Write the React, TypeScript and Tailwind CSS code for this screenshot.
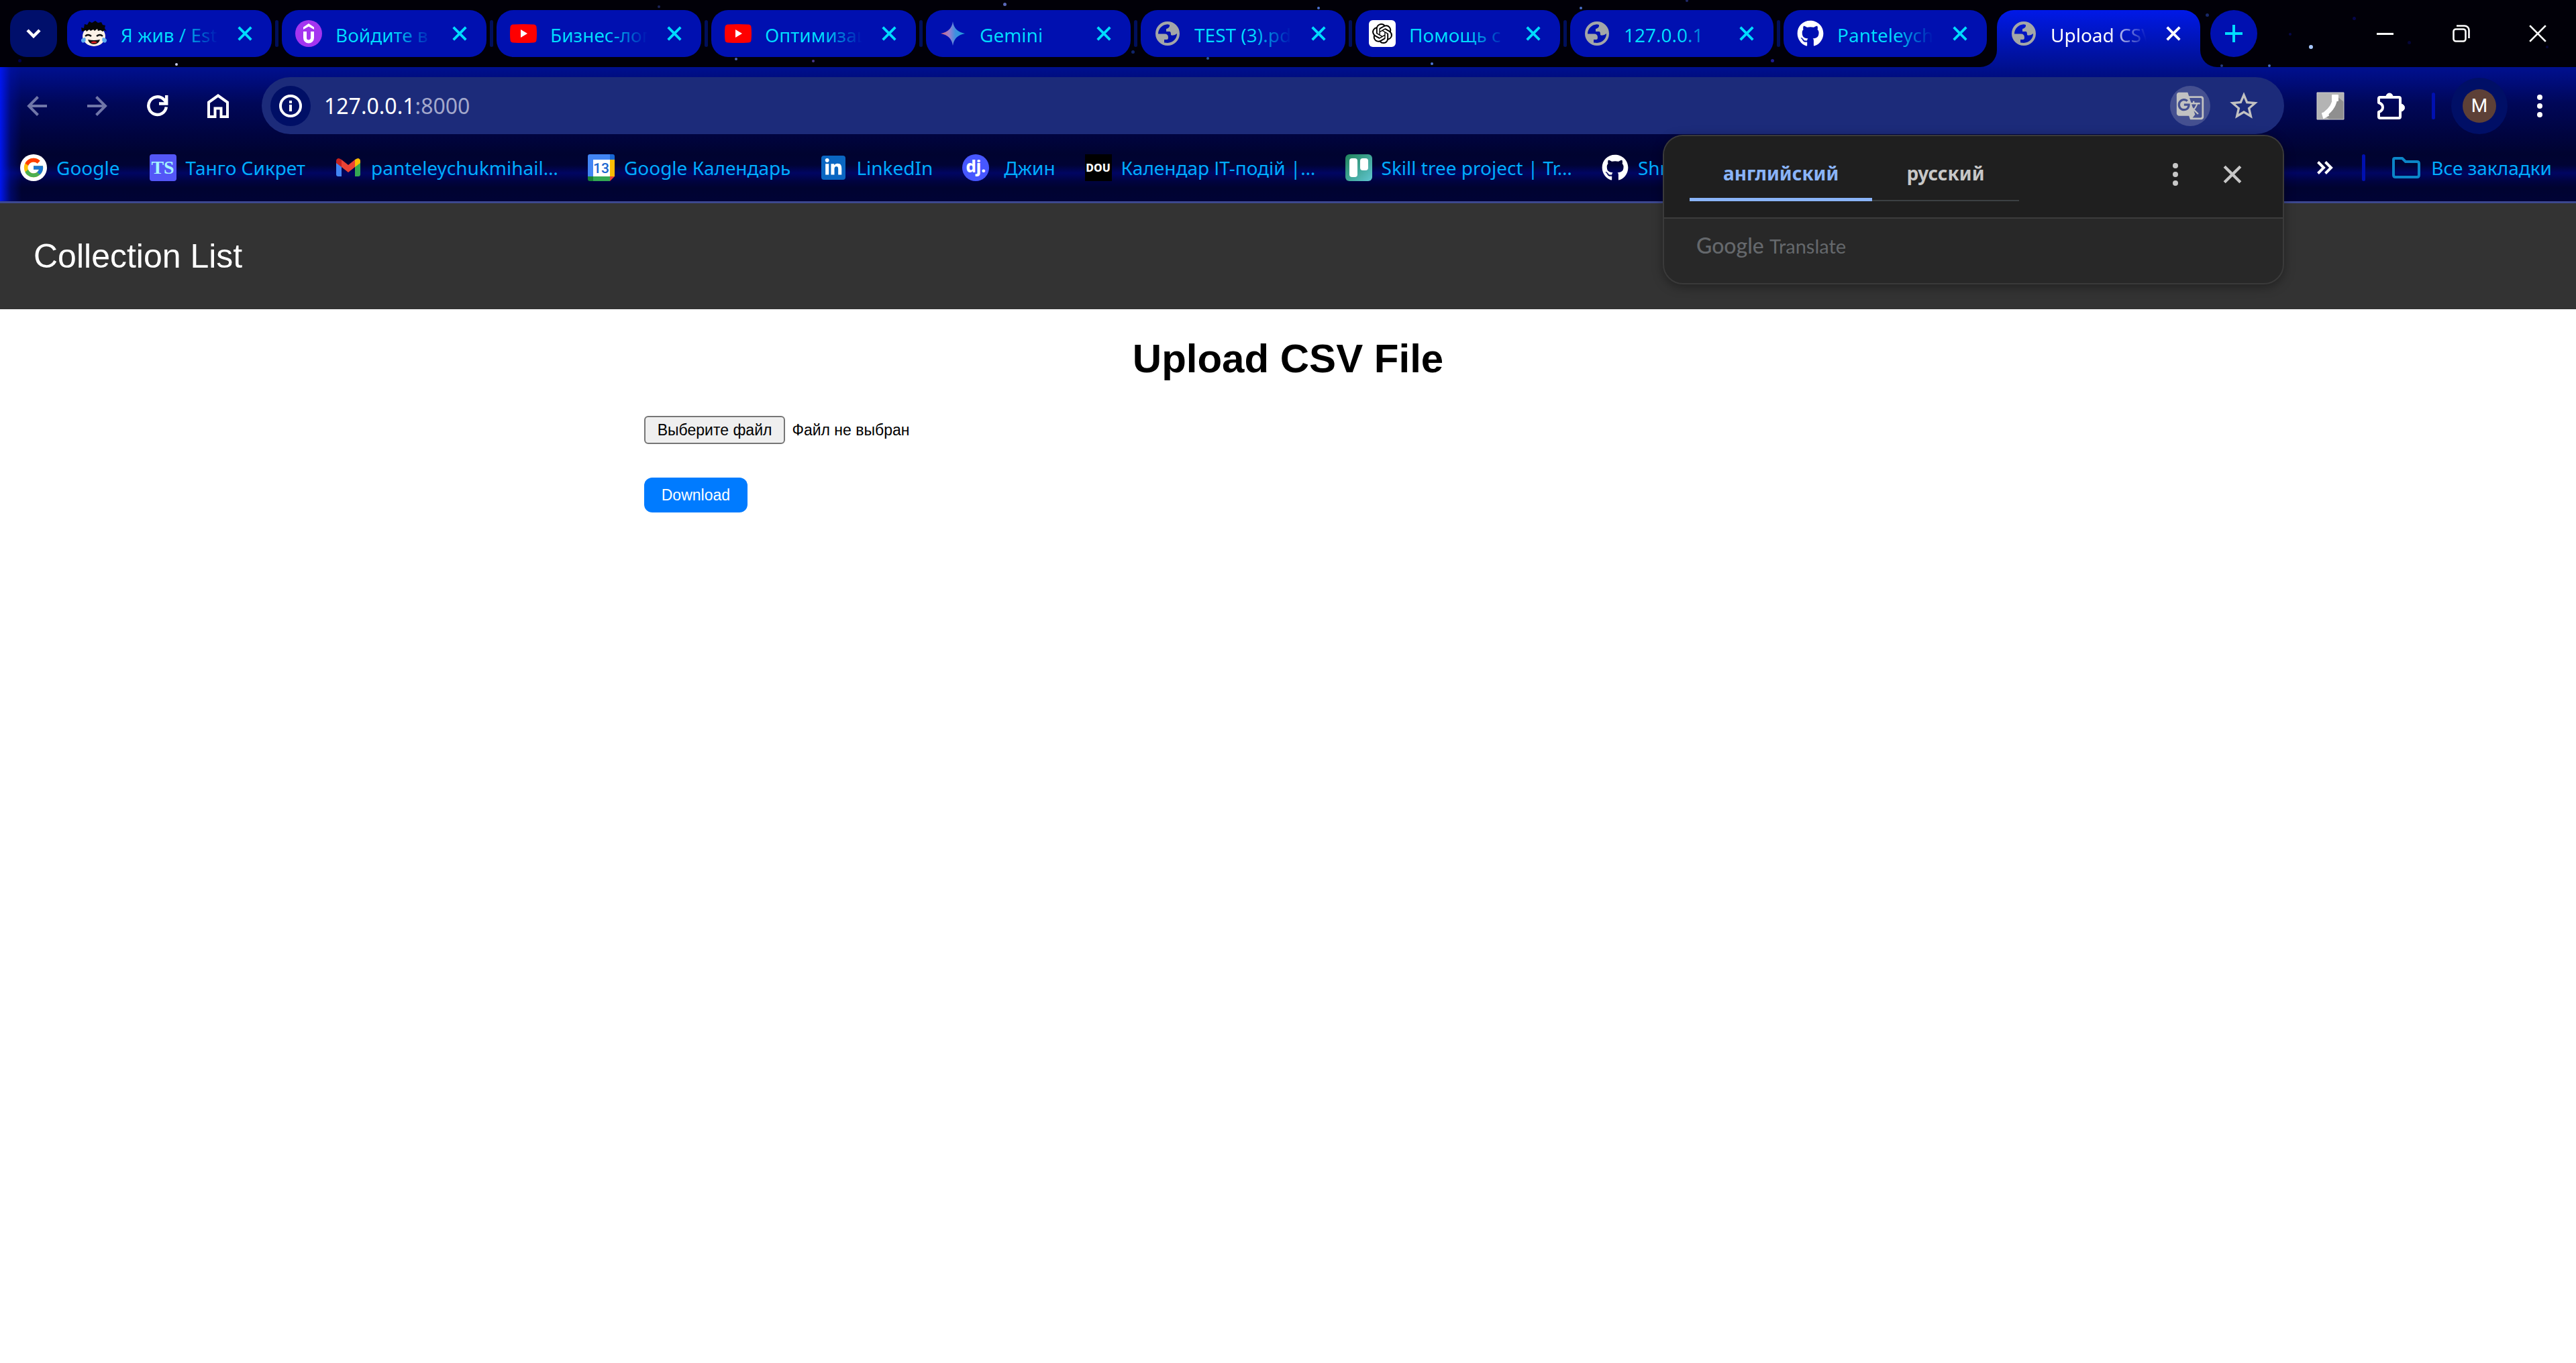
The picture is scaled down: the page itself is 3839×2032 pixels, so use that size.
import type { ReactNode } from "react";
import { FcGoogle } from "react-icons/fc";
import { FaGithub, FaLinkedinIn } from "react-icons/fa";
import { SiOpenai } from "react-icons/si";
import { MdGTranslate, MdStarOutline } from "react-icons/md";

/* ---------- favicons ---------- */

function LaughFace() {
  return (
    <svg viewBox="0 0 40 40" className="size-10">
      <ellipse cx="20" cy="24" rx="17" ry="15" fill="#fbf1e6" />
      <path d="M2 17 1 11l4 1L6 6l4 1 3-5 4 2 5-3 4 3 5-1 2 4 4 1-1 4 3 5-3-2-3 2-3-2-4 1-1-3-4 3-2-2-4 2-2-2-4 3-1-2z" fill="#050505" />
      <path d="M7 24q4-4 9 0M24 24q5-4 9 0" stroke="#111" strokeWidth="2.400" fill="none" />
      <path d="M11 29q9 2 18 0-2 7-9 7t-9-7z" fill="#111" />
      <path d="M15 33q5-3 10 0-5 3-10 0z" fill="#e02020" />
      <path d="M7 26q-7 1-6 5t5 2q3-2 1-7zM33 26q7 1 6 5t-5 2q-3-2-1-7z" fill="#5aa9f0" />
    </svg>
  );
}

function PurpleU() {
  return (
    <svg viewBox="0 0 40 40" className="size-10">
      <circle cx="20" cy="20" r="20" fill="#a435f0" />
      <path d="M12 10.500 20 5l8 5.500V14L20 9.500 12 14z" fill="#fff" />
      <path d="M14.500 17v9.500a5.500 5.500 0 0 0 11 0V17" stroke="#fff" strokeWidth="5" fill="none" />
    </svg>
  );
}

function YouTube() {
  return (
    <svg viewBox="0 0 40 40" className="size-10">
      <path d="M4 6.500q16-1 32 0 3 .5 3.500 3.500 1 10 0 20-.5 3-3.500 3.500-16 1-32 0-3-.5-3.500-3.500-1-10 0-20Q1 7 4 6.500z" fill="#f00" />
      <path d="M16 14v12l10-6z" fill="#fff" />
    </svg>
  );
}

function Spark() {
  return (
    <svg viewBox="0 0 40 40" className="size-10">
      <defs>
        <linearGradient id="spark" x1="0" y1="0" x2="1" y2="0">
          <stop offset="0" stopColor="#d96570" />
          <stop offset="0.35" stopColor="#9a7fd0" />
          <stop offset="0.6" stopColor="#3f8fe0" />
          <stop offset="1" stopColor="#1fa0d8" />
        </linearGradient>
      </defs>
      <path d="M20 2q2 15 18 18-16 3-18 18Q18 23 2 20 18 17 20 2z" fill="url(#spark)" />
    </svg>
  );
}

function Globe() {
  return (
    <svg viewBox="-2 -2 40 40" className="size-10">
      <path
        fillRule="evenodd"
        fill="#a3a6a8"
        d="M18 0a18 18 0 1 0 0 36 18 18 0 1 0 0-36zM21 5v2q-1 3-5 4v4h5q2 0 2 5 1 1.500 6 0l3-2c0 8-6 13.500-14 14l-5-.5V27h4q2 0 2-3 0-5.500-5-5.500H4c0-7.500 6-14 14-14.300z"
      />
    </svg>
  );
}

function OpenAi() {
  return (
    <span className="flex size-10 items-center justify-center rounded-md bg-white text-black">
      <SiOpenai size={30} />
    </span>
  );
}

function Octocat() {
  return <FaGithub size={40} className="text-white" />;
}

function GoogleG() {
  return (
    <span className="flex size-10 items-center justify-center rounded-full bg-white">
      <FcGoogle size={34} />
    </span>
  );
}

function TangoMark() {
  return (
    <span className="flex size-10 items-center justify-center rounded-sm bg-[#5457f7] font-['Liberation_Serif',serif] text-[28px] leading-none font-bold text-[#a5f3ff]">
      TS
    </span>
  );
}

function Gmail() {
  return (
    <svg viewBox="0 0 40 40" className="size-10">
      <path d="M2 12v18q0 3 3 3h5V18z" fill="#4285f4" />
      <path d="M30 18v15h5q3 0 3-3V12z" fill="#34a853" />
      <path d="M30 8v11l8-6v-3q0-3-3-4-2 0-5 2z" fill="#fbbc04" />
      <path d="M10 19V8l10 8 10-8v11l-10 8z" fill="#ea4335" />
      <path d="M2 10v3l8 6V8q-3-2-5-2-3 1-3 4z" fill="#c5221f" />
    </svg>
  );
}

function CalendarMark() {
  return (
    <svg viewBox="0 0 40 40" className="size-10">
      <path d="M3 0h30v8H8v25H0V3q0-3 3-3z" fill="#4285f4" />
      <path d="M33 0h4q3 0 3 3v5h-7z" fill="#1967d2" />
      <path d="M33 8h7v25h-7z" fill="#fbbc04" />
      <path d="M8 33h25v7H8z" fill="#34a853" />
      <path d="M0 33h8v7H3q-3 0-3-3z" fill="#188038" />
      <path d="M33 33h7l-7 7z" fill="#ea4335" />
      <path d="M8 8h25v25H8z" fill="#fff" />
      <text x="20" y="28" textAnchor="middle" fontFamily="Roboto, sans-serif" fontWeight="500" fontSize="21" fill="#1a66d0">13</text>
    </svg>
  );
}

function LinkedIn() {
  return (
    <span className="flex size-10 items-center justify-center">
      <span className="flex size-9 items-center justify-center rounded-sm bg-[#0a66c2] text-white">
        <FaLinkedinIn size={28} />
      </span>
    </span>
  );
}

function Djinni() {
  return (
    <span className="mr-2 flex size-10 items-center justify-center rounded-full bg-[#4757ff] pb-1 text-2xl leading-none font-extrabold text-white">
      dj.
    </span>
  );
}

function Dou() {
  return (
    <span className="flex size-10 items-center justify-center bg-black text-base leading-none font-extrabold text-white">
      DOU
    </span>
  );
}

function Trello() {
  return (
    <span className="flex size-10 items-start justify-center gap-1 rounded-md bg-linear-to-br from-[#1f845a] to-[#60c6d2] pt-[6px]">
      <span className="h-7 w-3 rounded-sm bg-white" />
      <span className="h-[18px] w-3 rounded-sm bg-white" />
    </span>
  );
}

/* ---------- shared pieces ---------- */

function Cross({ size, stroke }: { size: number; stroke: number }) {
  return (
    <svg width={size} height={size} viewBox="0 0 26 26">
      <path d="M2 2 24 24M24 2 2 24" stroke="currentColor" strokeWidth={stroke} fill="none" />
    </svg>
  );
}

function Dots({ className }: { className: string }) {
  return (
    <svg viewBox="0 0 10 36" className={className} fill="currentColor">
      <circle cx="5" cy="5" r="4" />
      <circle cx="5" cy="18" r="4" />
      <circle cx="5" cy="31" r="4" />
    </svg>
  );
}

/* ---------- tab strip ---------- */

type Tab = { title: string; icon: ReactNode };

const TABS: Tab[] = [
  { title: "Я жив / Est", icon: <LaughFace /> },
  { title: "Войдите в", icon: <PurpleU /> },
  { title: "Бизнес-лог", icon: <YouTube /> },
  { title: "Оптимизац", icon: <YouTube /> },
  { title: "Gemini", icon: <Spark /> },
  { title: "TEST (3).pd", icon: <Globe /> },
  { title: "Помощь с", icon: <OpenAi /> },
  { title: "127.0.0.1", icon: <Globe /> },
  { title: "Panteleych", icon: <Octocat /> },
];

const STARS: [number, number, number, string][] = [
  [263, 96, 4, "#c8ccf0"],
  [29, 90, 5, "#00004a"],
  [982, 10, 4, "#1c2458"],
  [1097, 88, 4, "#4a62b0"],
  [1212, 91, 4, "#4a3a90"],
  [1497, 6, 5, "#5a68b8"],
  [1688, 77, 5, "#10246a"],
  [1800, 87, 4, "#2858a0"],
  [1965, 12, 4, "#4a70d0"],
  [2134, 95, 4, "#5078d8"],
  [2356, 12, 4, "#4a70c8"],
  [2514, 1, 4, "#20286a"],
  [2641, 90, 5, "#1c1c90"],
  [3289, 22, 5, "#182868"],
  [3311, 98, 4, "#283c80"],
  [3382, 98, 4, "#4868b8"],
  [3413, 51, 4, "#06084a"],
  [3444, 70, 6, "#a8c8ff"],
  [3508, 27, 5, "#06064a"],
  [3590, 63, 5, "#050538"],
  [3796, 70, 4, "#050538"],
];

function TabBody({ tab }: { tab: Tab }) {
  return (
    <div className="flex h-[70px] items-center pr-5 pl-5">
      {tab.icon}
      <span className="mt-1 ml-5 min-w-0 flex-1 overflow-hidden mask-r-from-60% text-[28px] leading-10 whitespace-nowrap">
        {tab.title}
      </span>
      <button aria-label={"Закрыть " + tab.title} className="ml-5 flex size-10 shrink-0 items-center justify-center">
        <Cross size={22} stroke={4.5} />
      </button>
    </div>
  );
}

function Foot({ side }: { side: "left" | "right" }) {
  return (
    <svg
      viewBox="0 0 25 25"
      className={side === "left" ? "absolute bottom-0 -left-[25px] size-[25px]" : "absolute -right-[25px] bottom-0 size-[25px]"}
    >
      <defs>
        <linearGradient id={"foot-" + side} x1="0" y1="0" x2="0" y2="1">
          <stop offset="0" stopColor="#0012aa" />
          <stop offset="1" stopColor="#001090" />
        </linearGradient>
      </defs>
      <path d={side === "left" ? "M25 0v25H0A25 25 0 0 0 25 0z" : "M0 0v25h25A25 25 0 0 1 0 0z"} fill={`url(#foot-${side})`} />
    </svg>
  );
}

function TabStrip() {
  return (
    <div className="relative flex h-[100px] items-start bg-[#010008] pt-[15px] pl-[15px]">
      <div className="pointer-events-none absolute inset-0 overflow-hidden">
        {STARS.map(([x, y, d, c]) => (
          <span
            key={x}
            className="absolute rounded-full"
            style={{ left: x - d / 2, top: y - d / 2, width: d, height: d, background: c }}
          />
        ))}
      </div>
      <button aria-label="Поиск вкладок" className="relative mr-[15px] flex size-[70px] shrink-0 items-center justify-center rounded-[25px] bg-[#000f6b] text-white">
        <svg width="22" height="14" viewBox="0 0 22 14">
          <path d="M2 2 11 11 20 2" stroke="currentColor" strokeWidth="4.500" fill="none" />
        </svg>
      </button>
      {TABS.map((tab, i) => (
        <div
          key={i}
          className={
            i < TABS.length - 2
              ? "relative flex max-w-80 min-w-0 flex-1 items-center"
              : "relative flex max-w-[318px] min-w-0 flex-1 items-center"
          }
        >
          <div className="min-w-0 flex-1 rounded-[25px] bg-[#0010b0] text-[#00dcff]">
            <TabBody tab={tab} />
          </div>
          <span className={i < TABS.length - 1 ? "mx-[5px] h-10 w-[5px] rounded-full bg-[#000f5c]" : "w-[15px]"} />
        </div>
      ))}
      <div className="relative h-[85px] max-w-[303px] min-w-0 flex-1 rounded-t-[25px] bg-linear-to-b from-[#0019e8] to-[#001090] text-white">
        <Foot side="left" />
        <TabBody tab={{ title: "Upload CSV", icon: <Globe /> }} />
        <Foot side="right" />
      </div>
      <button aria-label="Новая вкладка" className="relative ml-[15px] flex size-[70px] shrink-0 items-center justify-center rounded-full bg-[#0010b0] text-[#00dcff]">
        <svg width="26" height="26" viewBox="0 0 26 26">
          <path d="M13 0v26M0 13h26" stroke="currentColor" strokeWidth="4" />
        </svg>
      </button>
      <div className="relative ml-auto flex h-[70px] shrink-0 items-center text-white">
        <button aria-label="Свернуть" className="flex h-[70px] w-[114px] items-center justify-center">
          <span className="h-[3px] w-[25px] bg-white" />
        </button>
        <button aria-label="Восстановить" className="flex h-[70px] w-[114px] items-center justify-center">
          <svg width="26" height="26" viewBox="0 0 26 26" fill="none" stroke="currentColor" strokeWidth="2.600">
            <rect x="1.500" y="6.500" width="18" height="18" rx="3.500" />
            <path d="M6 1.500h12a6.500 6.500 0 0 1 6.500 6.500v12" />
          </svg>
        </button>
        <button aria-label="Закрыть окно" className="flex h-[70px] w-[114px] items-center justify-center">
          <Cross size={28} stroke={2.5} />
        </button>
      </div>
    </div>
  );
}

/* ---------- address row ---------- */

function Tool({ label, children, dim }: { label: string; children: ReactNode; dim?: boolean }) {
  return (
    <button
      aria-label={label}
      className={dim ? "flex h-[85px] w-[90px] shrink-0 items-center justify-center text-[#7076a8]" : "flex h-[85px] w-[90px] shrink-0 items-center justify-center text-white"}
    >
      {children}
    </button>
  );
}

function AddressRow() {
  return (
    <div className="relative flex h-[100px] items-center pt-[15px] pr-[6px] pl-[10px]">
      <Tool label="Назад" dim>
        <svg width="30" height="30" viewBox="0 0 30 30" fill="none" stroke="currentColor" strokeWidth="4">
          <path d="M30 15H3M16.500 1.500 3 15l13.500 13.500" />
        </svg>
      </Tool>
      <Tool label="Вперёд" dim>
        <svg width="30" height="30" viewBox="0 0 30 30" fill="none" stroke="currentColor" strokeWidth="4">
          <path d="M0 15h27M13.500 1.500 27 15 13.500 28.500" />
        </svg>
      </Tool>
      <Tool label="Обновить">
        <svg width="32" height="32" viewBox="0 0 32 32" fill="none" stroke="currentColor" strokeWidth="4.500">
          <path d="M28.800 17.500A13.300 13.300 0 1 1 25 6.200l4 4M29.200 0v12.500H18" />
        </svg>
      </Tool>
      <Tool label="Главная">
        <svg width="32" height="36" viewBox="0 0 32 36" fill="none" stroke="currentColor" strokeWidth="4">
          <path d="M2 34V12.500L16 2.500l14 10V34h-9.500V21.500h-9V34z" />
        </svg>
      </Tool>
      <div className="ml-5 flex h-[85px] flex-1 items-center rounded-full bg-[#1c2b7a] pl-[13px]">
        <button aria-label="Сведения о сайте" className="flex size-[60px] shrink-0 items-center justify-center rounded-full bg-[#000f66] text-white">
          <svg width="34" height="34" viewBox="0 0 34 34">
            <circle cx="17" cy="17" r="15" stroke="currentColor" strokeWidth="4" fill="none" />
            <path d="M15 15h4v10h-4zM15 9h4v4h-4z" fill="currentColor" />
          </svg>
        </button>
        <p className="ml-5 flex-1 text-[32px] leading-10 text-white">
          127.0.0.1<span className="text-[#a3a8cb]">:8000</span>
        </p>
        <button aria-label="Перевести страницу" className="flex size-[60px] shrink-0 items-center justify-center rounded-full bg-[#455090] text-[#c2c2c2]">
          <MdGTranslate size={44} />
        </button>
        <button aria-label="Добавить в закладки" className="mr-[35px] ml-[25px] flex shrink-0 items-center justify-center text-[#c2c2c2]">
          <MdStarOutline size={50} />
        </button>
      </div>
      <div className="ml-6 flex shrink-0">
        <Tool label="Телефон">
          <svg width="42" height="42" viewBox="0 0 42 42">
            <path d="M1 1h40v40H1z" fill="#b4b4b4" />
            <path d="M30 6 41 15v26H20l-9-6z" fill="#8f8f8f" />
            <path d="M28 8q-1 15-15 25" stroke="#fff" strokeWidth="7" fill="none" />
            <path d="M24 5h8v8h-8zM9 32l7-2 2 5-7 4z" fill="#fff" stroke="#fff" strokeWidth="2" strokeLinejoin="round" />
            <path d="M1 1h40v40H1z" fill="none" stroke="#cfcfcf" />
          </svg>
        </Tool>
        <Tool label="Расширения">
          <svg width="42" height="42" viewBox="0 0 42 42">
            <path d="M5 8h28q2 0 2 2v27q0 2-2 2H5q-2 0-2-2v-7q6-2 6-7t-6-7v-6q0-2 2-2z" fill="none" stroke="currentColor" strokeWidth="4" strokeLinejoin="round" />
            <path d="M14 7a5 5 0 0 1 10 0zM36 18a5 5 0 0 1 0 11z" fill="currentColor" stroke="currentColor" />
          </svg>
        </Tool>
      </div>
      <span className="ml-4 h-10 w-[5px] rounded-full bg-[#0010b0]" />
      <button aria-label="Профиль" className="ml-6 flex size-[84px] shrink-0 items-center justify-center rounded-full bg-[#000f66]">
        <span className="flex size-[50px] items-center justify-center rounded-full bg-[#5d4037] font-[Roboto,sans-serif] text-[28px] leading-none text-white">
          M
        </span>
      </button>
      <button aria-label="Меню" className="flex h-[85px] w-24 shrink-0 items-center justify-center text-white">
        <Dots className="h-9 w-[10px]" />
      </button>
    </div>
  );
}

/* ---------- bookmarks ---------- */

const BOOKMARKS: Tab[] = [
  { title: "Google", icon: <GoogleG /> },
  { title: "Танго Сикрет", icon: <TangoMark /> },
  { title: "panteleychukmihail…", icon: <Gmail /> },
  { title: "Google Календарь", icon: <CalendarMark /> },
  { title: "LinkedIn", icon: <LinkedIn /> },
  { title: "Джин", icon: <Djinni /> },
  { title: "Календар ІТ-подій |…", icon: <Dou /> },
  { title: "Skill tree project | Tr…", icon: <Trello /> },
  { title: "Shr", icon: <Octocat /> },
];

function BookmarksRow() {
  return (
    <nav className="relative flex h-[100px] items-center pr-9 pl-[30px] text-[28px] leading-10 whitespace-nowrap text-[#00adff]">
      <div className="flex min-w-0 flex-1 gap-11 overflow-hidden">
        {BOOKMARKS.map((b) => (
          <a key={b.title} href="#" className="flex shrink-0 items-center gap-[14px]">
            {b.icon}
            {b.title}
          </a>
        ))}
      </div>
      <button aria-label="Другие закладки" className="flex size-[70px] shrink-0 items-center justify-center text-white">
        <svg width="24" height="20" viewBox="0 0 24 20" fill="none" stroke="currentColor" strokeWidth="4">
          <path d="M1.500 1.500 10 10l-8.500 8.500M12.500 1.500 21 10l-8.500 8.500" />
        </svg>
      </button>
      <span className="ml-5 h-10 w-[5px] rounded-full bg-[#0010b0]" />
      <a href="#" className="ml-10 flex items-center gap-4">
        <svg width="42" height="32" viewBox="0 0 42 32" fill="none" stroke="#0b86c8" strokeWidth="4" strokeLinejoin="round">
          <path d="M4 2h11l5 5h17q3 0 3 3v17q0 3-3 3H5q-3 0-3-3V4q0-2 2-2z" />
        </svg>
        Все закладки
      </a>
    </nav>
  );
}

/* ---------- translate bubble ---------- */

function TranslateBubble() {
  return (
    <section
      aria-label="Google Translate"
      className="absolute top-[201px] right-[435px] z-10 w-[926px] overflow-hidden rounded-[30px] border-2 border-[#3a3a3a] bg-[#282828] shadow-[0_4px_16px_rgba(0,0,0,0.35)]"
    >
      <div className="flex h-[123px] items-start border-b-2 border-[#3c3c3c] bg-[#1f1f1f] pr-[38px] pl-[38px] text-[28px] font-bold">
        <div role="tablist" className="flex flex-1 leading-10">
          <button role="tab" aria-selected="true" className="h-[97px] px-[50px] pt-3 text-[#8ab4f8] shadow-[inset_0_-5px_#8ab4f8]">
            английский
          </button>
          <button role="tab" aria-selected="false" className="h-[97px] px-[51px] pt-3 text-[#c7c7c7] shadow-[inset_0_-2px_#3c4043]">
            русский
          </button>
        </div>
        <button aria-label="Параметры перевода" className="flex h-[114px] w-[95px] items-center justify-center text-[#c7c7c7]">
          <Dots className="h-9 w-[10px]" />
        </button>
        <button aria-label="Закрыть" className="flex h-[114px] w-[75px] items-center justify-center text-[#c7c7c7]">
          <Cross size={28} stroke={4} />
        </button>
      </div>
      <p className="h-[96px] pt-5 pl-12 font-[Lato,sans-serif] text-[32px] leading-10 text-[#65686c]">
        <span className="font-medium">Google</span> <span className="text-[29px]">Translate</span>
      </p>
    </section>
  );
}

/* ---------- page ---------- */

export default function App() {
  return (
    <div className="min-h-screen bg-white font-['Noto_Sans',sans-serif]">
      <div className="relative">
        <TabStrip />
        <div className="relative border-b-3 border-[#3d4890] bg-[linear-gradient(to_bottom,#00108f_0%,#000d80_8%,#000758_27%,#000440_50%,#000330_65%,#000334_73%,#000562_79%,#000340_85%,#000330_90%,#000336_100%)]">
          <div className="pointer-events-none absolute inset-y-0 left-0 w-8 bg-linear-to-r from-[#0016f0] via-[#0010b0]/40 to-transparent" />
          <AddressRow />
          <BookmarksRow />
        </div>
        <TranslateBubble />
      </div>
      <div className="font-['Liberation_Sans',sans-serif]">
        <header className="bg-[#333] p-[50px]">
          <a href="#" className="block text-[50px] leading-[58px] text-white">
            Collection List
          </a>
        </header>
        <main className="mx-auto w-1/2">
          <h1 className="mt-[39px] text-center text-6xl leading-[70px] font-bold text-black">Upload CSV File</h1>
          <form className="mt-[50px] text-[23px] leading-7 text-black">
            <div className="flex items-center gap-[10px]">
              <input id="csv" type="file" accept=".csv" className="sr-only" />
              <label htmlFor="csv" className="flex h-[42px] items-center rounded-md border-2 border-[#767676] bg-[#efefef] px-[18px]">
                Выберите файл
              </label>
              <span>Файл не выбран</span>
            </div>
            <button type="button" className="mt-[50px] rounded-xl bg-[#007bff] px-[26px] py-3 text-white">
              Download
            </button>
          </form>
        </main>
      </div>
    </div>
  );
}
